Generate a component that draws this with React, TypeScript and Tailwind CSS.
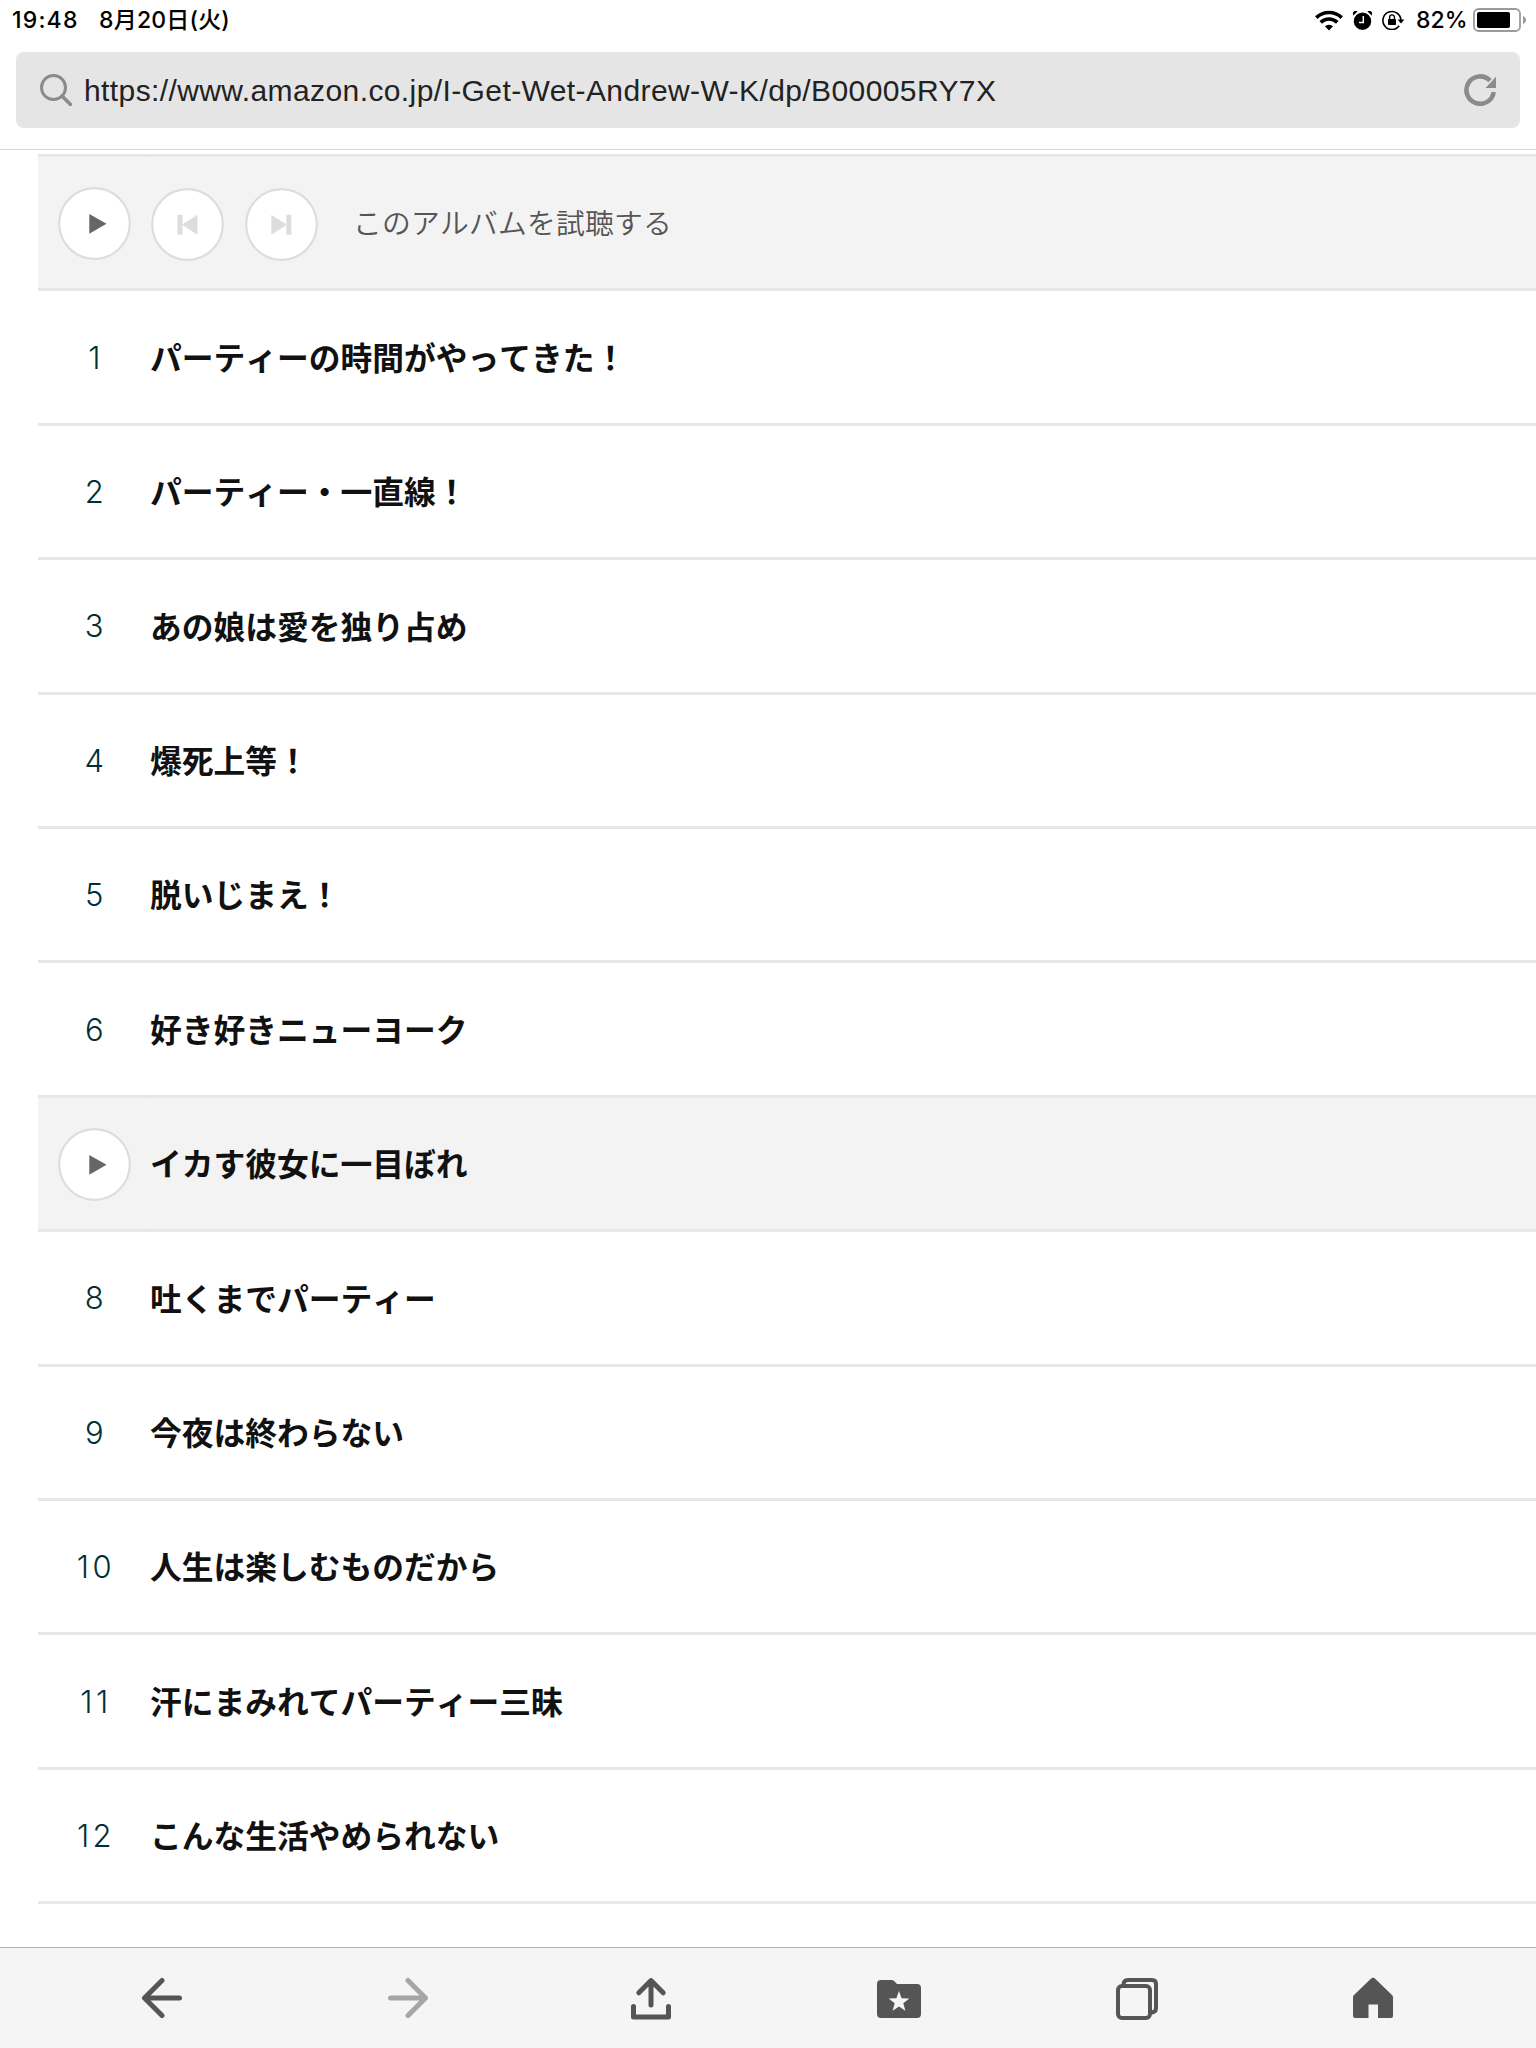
import React from 'react';

const TRACKS = [
  'パーティーの時間がやってきた！',
  'パーティー・一直線！',
  'あの娘は愛を独り占め',
  '爆死上等！',
  '脱いじまえ！',
  '好き好きニューヨーク',
  'イカす彼女に一目ぼれ',
  '吐くまでパーティー',
  '今夜は終わらない',
  '人生は楽しむものだから',
  '汗にまみれてパーティー三昧',
  'こんな生活やめられない'
];

const ACTIVE_TRACK = 7;

function StatusBar() {
  return (
    <div className="flex h-10 items-center pl-[12px] pr-[9px] text-[23px] leading-none font-medium text-black font-['Inter','Noto_Sans_CJK_JP',sans-serif]">
      <span className="w-[87px] tracking-[1.2px]">19:48</span>
      <span className="tracking-[0.2px]">8月20日(火)</span>

      <svg className="ml-auto" width="28" height="21" viewBox="0 0 28 21" fill="none" stroke="#000">
        <path d="M1.3 7.6a18.2 18.2 0 0 1 25.4 0" strokeWidth="3.6" />
        <path d="M5.7 12.4a11.8 11.8 0 0 1 16.6 0" strokeWidth="3.6" />
        <path d="M14 20.6 9.9 16.3a6 6 0 0 1 8.2 0Z" fill="#000" stroke="none" />
      </svg>
      <svg className="ml-[10px]" width="19" height="19" viewBox="0 0 19 19">
        <circle cx="9.5" cy="10.2" r="8.7" />
        <path d="M0.2 4.6A3 3 0 0 1 4.6 0.6Z M18.8 4.6A3 3 0 0 0 14.4 0.6Z" />
        <path d="M10.3 5v6.4H6" fill="none" stroke="#fff" strokeWidth="1.5" />
      </svg>
      <svg className="ml-[10px]" width="23" height="20" viewBox="0 0 23 20">
        <path d="M17.2 15.8A9 9 0 1 1 18.9 10" fill="none" stroke="#000" strokeWidth="1.6" />
        <path d="M15.6 9.6h6.8L19 13.6Z" />
        <rect x="6" y="9" width="8" height="6" rx="0.8" />
        <path d="M7.6 9.5V7.3a2.4 2.4 0 0 1 4.8 0v2.2" fill="none" stroke="#000" strokeWidth="1.4" />
      </svg>
      <span className="ml-[11px] w-[52px]">82%</span>
      <svg className="ml-[5px]" width="54" height="24" viewBox="0 0 54 24">
        <rect x="1" y="1" width="46" height="22" rx="4.5" fill="none" stroke="#9b9b9b" strokeWidth="1.8" />
        <rect x="4" y="4" width="33" height="16" rx="2" />
        <path d="M50 8c2 .7 3 2.3 3 4s-1 3.3-3 4Z" fill="#9b9b9b" />
      </svg>
    </div>
  );
}

function AddressBar() {
  return (
    <div className="mx-4 mt-3 flex h-[76px] items-center rounded-lg bg-[#e5e5e5] pl-6 pr-6">
      <svg width="32" height="32" viewBox="0 0 32 32" fill="none" stroke="#8b8b8b">
        <circle cx="13.5" cy="13.5" r="12" strokeWidth="3" />
        <path d="m22 22 8.5 8.5" strokeWidth="3.6" strokeLinecap="round" />
      </svg>
      <span className="ml-[12px] pt-[2px] text-[30px] leading-none tracking-[0.4px] text-[#222] font-['Liberation_Sans',sans-serif]">
        https://www.amazon.co.jp/I-Get-Wet-Andrew-W-K/dp/B00005RY7X
      </span>
      <svg className="ml-auto" width="32" height="32" viewBox="0 0 32 32">
        <path d="M29.7 18A13.7 13.7 0 1 1 26 6.6" fill="none" stroke="#8b8b8b" strokeWidth="4.6" />
        <path d="M32 2.8V14H21.5Z" fill="#8b8b8b" />
      </svg>
    </div>
  );
}

function RoundButton({ children, className = '' }: { children: React.ReactNode; className?: string }) {
  return (
    <svg className={`shrink-0 ${className}`} width="73" height="73" viewBox="0 0 73 73">
      <circle cx="36.5" cy="36.5" r="35.3" fill="#fff" stroke="#ddd" strokeWidth="2.2" />
      {children}
    </svg>
  );
}

function PlayButton() {
  return (
    <RoundButton>
      <path d="M31.3 26.9v19.8L48.5 36.8Z" fill="#666" />
    </RoundButton>
  );
}

function AlbumRow() {
  return (
    <div className="flex h-[134.48px] border-t-3 border-[#e7e7e7] bg-[#f3f3f3]">
      <div className="flex w-[113px] items-center justify-center border-r border-[#f6f6f6] pt-[2px]">
        <PlayButton />
      </div>
      <div className="flex items-center pt-[3px]">
        <RoundButton>
          <path d="M26.5 26.7h5v20h-5Z M46.5 26.7v20L31 36.7Z" fill="#ddd" />
        </RoundButton>
        <RoundButton className="ml-[21px]">
          <path d="M26.3 26.7v20L42 36.7Z M41.3 26.7h5v20h-5Z" fill="#ddd" />
        </RoundButton>
      </div>
      <span className="ml-[35px] self-center text-[28.8px] leading-none tracking-[0.2px] font-[350] text-[#555] [font-kerning:none] font-['Noto_Sans_CJK_JP',sans-serif]">
        このアルバムを試聴する
      </span>
    </div>
  );
}

function TrackRow({ number, title }: { number: number; title: string }) {
  const active = number === ACTIVE_TRACK;

  return (
    <div className={`flex h-[134.4px] items-center border-t-3 border-[#e7e7e7] ${active ? 'bg-[#f3f3f3]' : 'bg-white'}`}>
      <div className={`flex h-full w-[113px] shrink-0 items-center justify-center ${active ? 'border-r border-[#f6f6f6] pt-[2px]' : ''}`}>
        {active ? (
          <PlayButton />
        ) : (
          <span className="pl-[3px] text-[31px] leading-none font-light tracking-[3.5px] text-[#002f36] font-['Inter',sans-serif]">{number}</span>
        )}
      </div>
      <span className="-ml-px pb-px text-[31.75px] leading-none font-bold text-[#111] [font-kerning:none] font-['Noto_Sans_CJK_JP',sans-serif]">
        {title}
      </span>
    </div>
  );
}

function Toolbar() {
  return (
    <nav className="flex h-[101px] shrink-0 items-start border-t border-[#b2b2b2] bg-[#f5f5f5] pt-[29px] pl-[141px] text-[#555]">
      <svg width="42" height="42" viewBox="0 0 42 42" fill="none" stroke="currentColor" strokeWidth="5" strokeLinecap="round" strokeLinejoin="round">
        <path d="M21 3.5 3.5 21 21 38.5M4 21h34.5" />
      </svg>
      <svg className="ml-[204px] text-[#a6a6a6]" width="42" height="42" viewBox="0 0 42 42" fill="none" stroke="currentColor" strokeWidth="5" strokeLinecap="round" strokeLinejoin="round">
        <path d="M21 3.5 38.5 21 21 38.5M38 21H3.5" />
      </svg>
      <svg className="ml-[201px]" width="42" height="44" viewBox="0 0 42 44" fill="none" stroke="currentColor" strokeWidth="5" strokeLinecap="round" strokeLinejoin="round">
        <path d="M21 28V4M8.8 15.8 21 3.6l12.2 12.2M3.5 29.5v10.5h35V29.5" />
      </svg>
      <svg className="ml-[205px]" width="44" height="42" viewBox="0 0 44 42">
        <path d="M4 3h10.500q1.500 0 2.600 1.100L20 7h20q4 0 4 4v26q0 4-4 4H4q-4 0-4-4V7q0-4 4-4Z" fill="currentColor" />
        <path d="m22 14 2.600 7.200 7.700.3-6 4.700 2.100 7.500-6.400-4.300-6.400 4.300 2.100-7.500-6-4.700 7.700-.3Z" fill="#f5f5f5" />
      </svg>
      <svg className="ml-[195px]" width="42" height="44" viewBox="0 0 42 44" fill="none" stroke="currentColor" strokeWidth="4">
        <rect x="2" y="9" width="32" height="32" rx="4" />
        <path d="M7.5 9V8q0-5 4.5-5h24q4 0 4 4v24q0 4-4 4.500h-2" />
      </svg>
      <svg className="ml-[195px]" width="40" height="42" viewBox="0 0 40 42" fill="currentColor">
        <path d="M17.600 2a3.400 3.400 0 0 1 4.800 0L39 18q1 1 1 2.400V39q0 2-2 2H25V27.500H15.500V41H2q-2 0-2-2V20.400Q0 19 1 18Z" />
      </svg>
    </nav>
  );
}

export default function App() {
  return (
    <div className="flex h-[2048px] w-[1536px] flex-col overflow-hidden bg-white">
      <div className="h-[150px] shrink-0 border-b border-[#d9d9d9]">
        <StatusBar />
        <AddressBar />
      </div>
      <main className="ml-[38px] min-h-0 flex-1 pt-1">
        <AlbumRow />
        {TRACKS.map((title, index) => (
          <TrackRow key={title} number={index + 1} title={title} />
        ))}
        <div className="border-t-3 border-[#e9e9e9]" />
      </main>
      <Toolbar />
    </div>
  );
}
